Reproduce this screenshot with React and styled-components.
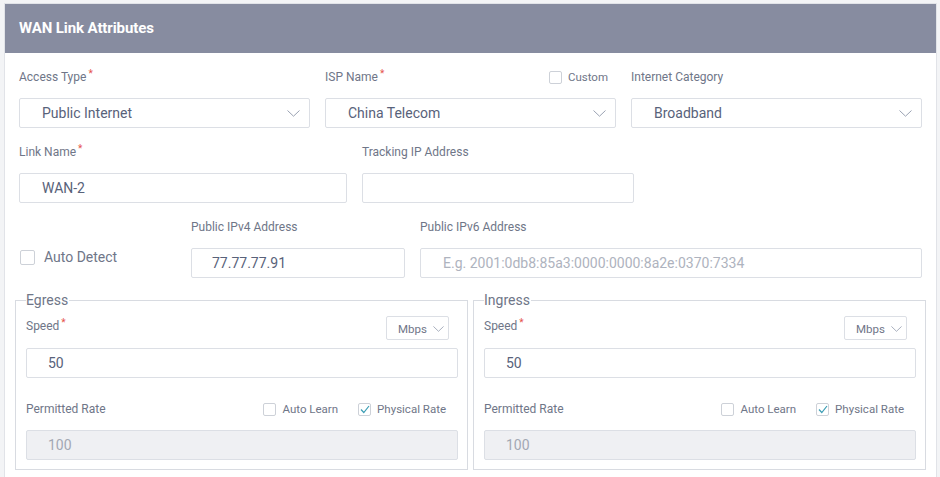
import React from "react";
import styled, { createGlobalStyle } from "styled-components";

const Global = createGlobalStyle`
  html, body { margin: 0; padding: 0; background: #f3f4f6; }
  body { font-family: Roboto, "Liberation Sans", Arial, sans-serif; }
  #root { padding: 3px 3px 0 4px; }
  * { box-sizing: border-box; }
`;

const Card = styled.div`
  background: #fff;
  border: 1px solid #e1e3e8;
  border-bottom: none;
  height: 474px;
  overflow: hidden;
`;

const Header = styled.div`
  height: 49px;
  background: #878ca0;
  color: #fff;
  font-weight: 700;
  font-size: 15px;
  display: flex;
  align-items: center;
  padding: 0 14px 1px;
  letter-spacing: -0.1px;
`;

const Body = styled.div`
  padding: 16px 14px 0;
  display: flex;
  flex-direction: column;
  gap: 16px;
`;

const Row = styled.div`
  display: grid;
  grid-template-columns: ${(p) => p.$cols};
  column-gap: 15px;
  align-items: end;
`;

const Field = styled.div`
  display: flex;
  flex-direction: column;
  gap: 13px;
  min-width: 0;
`;

const LabelRow = styled.div`
  display: flex;
  align-items: center;
  justify-content: space-between;
  height: 16px;
`;

const Label = styled.span`
  font-size: 12px;
  line-height: 16px;
  color: #6f7688;
  white-space: nowrap;
`;

const Req = styled.sup`
  color: #e5534b;
  font-size: 10px;
  margin-left: 2px;
  vertical-align: 4px;
  line-height: 0;
`;

const Box = styled.div`
  height: 30px;
  border: 1px solid #dcdfe5;
  border-radius: 2px;
  background: ${(p) => (p.$disabled ? "#eff0f3" : "#fff")};
  display: flex;
  align-items: center;
  justify-content: space-between;
  padding: 0 9px 0 ${(p) => p.$pl || 22}px;
  font-size: 14px;
  color: ${(p) => (p.$placeholder ? "#aeb3be" : p.$disabled ? "#a3a8b3" : "#58627a")};
  white-space: nowrap;
  overflow: hidden;
`;

const Chevron = ({ w = 13, h = 7 }) => (
  <svg width={w} height={h} viewBox="0 0 13 7" fill="none" preserveAspectRatio="none">
    <polyline points="0.5,0.5 6.5,6.2 12.5,0.5" stroke="#9aa2b3" strokeWidth="1" />
  </svg>
);

const CheckLabel = styled.label`
  display: flex;
  align-items: center;
  gap: ${(p) => p.$gap || 6}px;
  font-size: ${(p) => p.$size || 11.5}px;
  color: #6f7688;
  white-space: nowrap;
`;

const CheckSquare = styled.span`
  width: ${(p) => p.$s || 13}px;
  height: ${(p) => p.$s || 13}px;
  border: 1px solid #cdd1d8;
  border-radius: 2px;
  background: #fff;
  display: inline-flex;
  align-items: center;
  justify-content: center;
  flex: none;
`;

const Check = ({ checked, size, gap, fs, children }) => (
  <CheckLabel $gap={gap} $size={fs}>
    <CheckSquare $s={size}>
      {checked && (
        <svg width="10" height="9" viewBox="0 0 10 9" fill="none">
          <polyline points="1,4.5 3.8,7.5 9,1" stroke="#3b9db4" strokeWidth="1.2" />
        </svg>
      )}
    </CheckSquare>
    {children}
  </CheckLabel>
);

const CustomWrap = styled.div`
  margin-right: 8px;
`;

const AutoDetect = styled.div`
  height: 30px;
  display: flex;
  align-items: center;
  padding-left: 1px;
  padding-bottom: 12px;
`;

const FieldsetRow = styled.div`
  display: grid;
  grid-template-columns: 1fr 1fr;
  column-gap: 5px;
  margin: -2px -4px 0;
`;

const Fieldset = styled.fieldset`
  margin: 0;
  border: 1px solid #d8dbe1;
  padding: 0 9px 9px 10px;
  min-width: 0;
  display: flex;
  flex-direction: column;
`;

const Legend = styled.legend`
  padding: 0 1px 0 0;
  font-size: 14px;
  line-height: 16px;
  color: #6f7688;
`;

const SpeedHead = styled.div`
  display: flex;
  justify-content: space-between;
  align-items: flex-start;
  margin-top: 8px;
  height: 24px;
`;

const SpeedLabel = styled(Label)`
  margin-top: 2px;
`;

const UnitSelect = styled.div`
  width: 63px;
  height: 24px;
  border: 1px solid #dcdfe5;
  border-radius: 2px;
  margin-right: 9px;
  display: flex;
  align-items: center;
  gap: 6px;
  padding: 1px 0 0 11px;
  font-size: 11.5px;
  color: #6f7688;
`;

const SpeedInput = styled(Box)`
  margin-top: 8px;
  padding-left: 21px;
`;

const RateHead = styled.div`
  display: flex;
  justify-content: space-between;
  align-items: center;
  height: 16px;
  margin-top: 23px;
  margin-bottom: 13px;
  padding-right: 12px;
`;

const RateChecks = styled.div`
  display: flex;
  gap: 20px;
`;

const Direction = ({ title }) => (
  <Fieldset>
    <Legend>{title}</Legend>
    <SpeedHead>
      <SpeedLabel>
        Speed<Req>*</Req>
      </SpeedLabel>
      <UnitSelect>
        <span>Mbps</span>
        <Chevron w={11} h={6} />
      </UnitSelect>
    </SpeedHead>
    <SpeedInput>50</SpeedInput>
    <RateHead>
      <Label>Permitted Rate</Label>
      <RateChecks>
        <Check>Auto Learn</Check>
        <Check checked>Physical Rate</Check>
      </RateChecks>
    </RateHead>
    <Box $disabled $pl={21}>100</Box>
  </Fieldset>
);

export default function App() {
  return (
    <>
      <Global />
      <Card>
        <Header>WAN Link Attributes</Header>
        <Body>
          <Row $cols="1fr 1fr 1fr">
            <Field>
              <LabelRow>
                <Label>
                  Access Type<Req>*</Req>
                </Label>
              </LabelRow>
              <Box>
                Public Internet <Chevron />
              </Box>
            </Field>
            <Field>
              <LabelRow>
                <Label>
                  ISP Name<Req>*</Req>
                </Label>
                <CustomWrap>
                  <Check size={13}>Custom</Check>
                </CustomWrap>
              </LabelRow>
              <Box>
                China Telecom <Chevron />
              </Box>
            </Field>
            <Field>
              <LabelRow>
                <Label>Internet Category</Label>
              </LabelRow>
              <Box>
                Broadband <Chevron />
              </Box>
            </Field>
          </Row>
          <Row $cols="328px 272px 1fr">
            <Field>
              <LabelRow>
                <Label>
                  Link Name<Req>*</Req>
                </Label>
              </LabelRow>
              <Box>WAN-2</Box>
            </Field>
            <Field>
              <LabelRow>
                <Label>Tracking IP Address</Label>
              </LabelRow>
              <Box />
            </Field>
          </Row>
          <Row $cols="157px 214px 1fr">
            <AutoDetect>
              <Check size={15} gap={9} fs={14}>
                Auto Detect
              </Check>
            </AutoDetect>
            <Field>
              <LabelRow>
                <Label>Public IPv4 Address</Label>
              </LabelRow>
              <Box $pl={20}>77.77.77.91</Box>
            </Field>
            <Field>
              <LabelRow>
                <Label>Public IPv6 Address</Label>
              </LabelRow>
              <Box $placeholder>E.g. 2001:0db8:85a3:0000:0000:8a2e:0370:7334</Box>
            </Field>
          </Row>
          <FieldsetRow>
            <Direction title="Egress" />
            <Direction title="Ingress" />
          </FieldsetRow>
        </Body>
      </Card>
    </>
  );
}
